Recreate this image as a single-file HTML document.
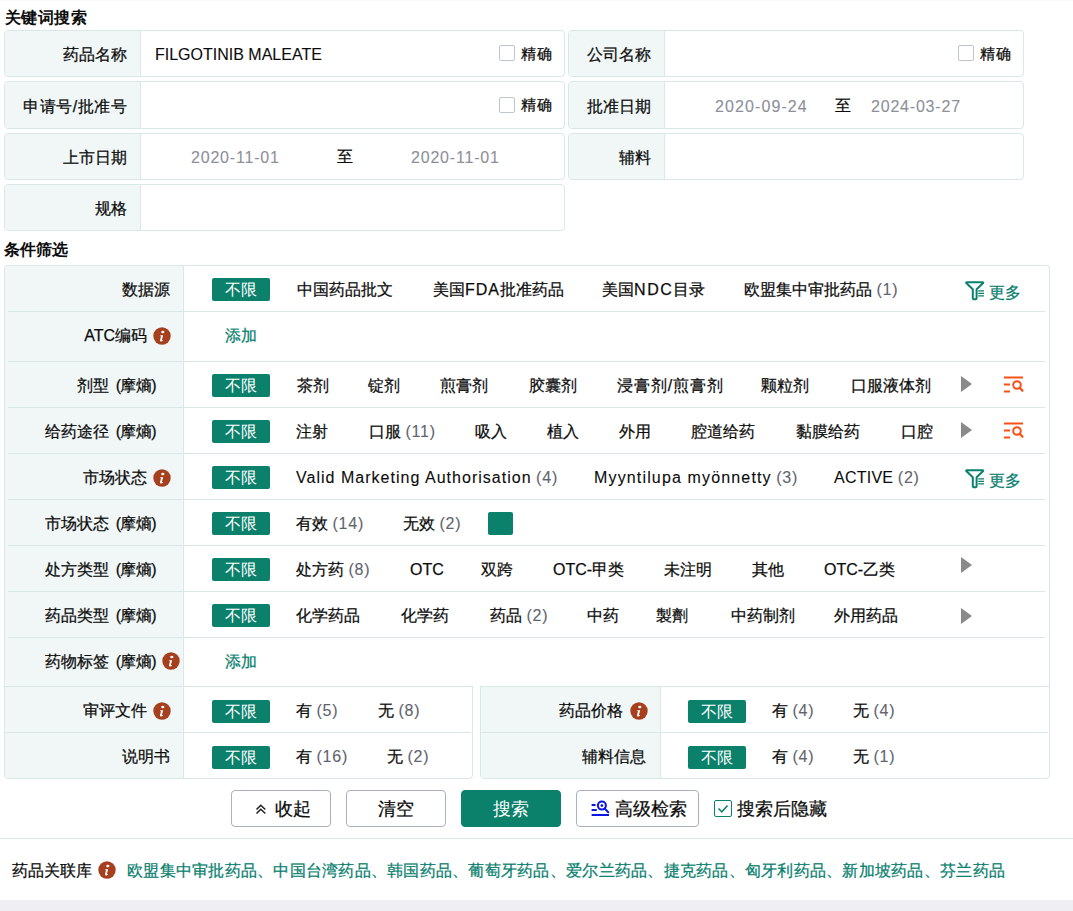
<!DOCTYPE html><html><head><meta charset="utf-8"><style>
*{margin:0;padding:0;box-sizing:border-box}
html,body{width:1073px;height:911px;overflow:hidden;background:#fff}
body{position:relative;font-family:"Liberation Sans",sans-serif;font-size:16px;color:#0c0c0c;font-weight:500;-webkit-text-stroke:0.25px currentColor}
.a{position:absolute;white-space:nowrap}
.t{position:absolute;white-space:nowrap;line-height:20px;height:20px}
.box{position:absolute;border:1px solid #d7e8e6;border-radius:4px;background:#fff;overflow:hidden}
.lbl{position:absolute;left:0;top:0;bottom:0;background:#f1f7f7;border-right:1px solid #d7e8e6}
.tag{position:absolute;background:#0b806b;color:#fff;-webkit-text-stroke:0;border-radius:2px;text-align:center;line-height:23px;height:23px;width:58px}
.c{color:#5f646d;letter-spacing:0.8px;-webkit-text-stroke:0.1px currentColor}
.lat{letter-spacing:0.8px;-webkit-text-stroke:0.1px currentColor}
.date{color:#8c9099}
.info{position:absolute;width:17px;height:17px;border-radius:50%;background:#a3401d;color:#fff;font-family:"Liberation Serif",serif;font-style:italic;font-weight:bold;font-size:13px;line-height:17px;text-align:center}
.tri{position:absolute;width:0;height:0;border-top:8px solid transparent;border-bottom:8px solid transparent;border-left:11px solid #8a8a8a}
.link{color:#08806e}
.btn{position:absolute;border:1px solid #a9b0bf;border-radius:4px;background:#fff;text-align:center;font-size:18px;line-height:36px;height:37px}
.chk{position:absolute;width:16px;height:16px;border:1px solid #bfc5cf;border-radius:2px;background:#fff}
</style></head><body><div class="a" style="left:0;top:0;width:1073px;height:1px;background:#f9f9f9"></div>
<div class="t" style="left:5px;top:7.5px;font-weight:bold;-webkit-text-stroke:0;letter-spacing:0.4px">关键词搜索</div>
<div class="box" style="left:4px;top:30.00px;width:561px;height:47.33px"><div class="lbl" style="width:136px"></div></div>
<div class="box" style="left:568px;top:30.00px;width:456px;height:47.33px"><div class="lbl" style="width:96px"></div></div>
<div class="box" style="left:4px;top:81.33px;width:561px;height:47.33px"><div class="lbl" style="width:136px"></div></div>
<div class="box" style="left:568px;top:81.33px;width:456px;height:47.33px"><div class="lbl" style="width:96px"></div></div>
<div class="box" style="left:4px;top:132.66px;width:561px;height:47.33px"><div class="lbl" style="width:136px"></div></div>
<div class="box" style="left:568px;top:132.66px;width:456px;height:47.33px"><div class="lbl" style="width:96px"></div></div>
<div class="box" style="left:4px;top:183.99px;width:561px;height:47.33px"><div class="lbl" style="width:136px"></div></div>
<div class="t " style="right:946px;top:45.2px;">药品名称</div>
<div class="t " style="right:946px;top:96.5px;letter-spacing:0.6px;margin-right:-0.6px">申请号/批准号</div>
<div class="t " style="right:946px;top:147.8px;">上市日期</div>
<div class="t " style="right:946px;top:199.2px;">规格</div>
<div class="t " style="right:422px;top:45.2px;">公司名称</div>
<div class="t " style="right:422px;top:96.5px;">批准日期</div>
<div class="t " style="right:422px;top:147.8px;">辅料</div>
<div class="t " style="left:155px;top:45.2px;-webkit-text-stroke:0.1px currentColor">FILGOTINIB MALEATE</div>
<div class="chk" style="left:499px;top:45.2px"></div>
<div class="t " style="left:521px;top:43.7px;font-size:15px;letter-spacing:0.8px">精确</div>
<div class="chk" style="left:499px;top:96.5px"></div>
<div class="t " style="left:521px;top:95.0px;font-size:15px;letter-spacing:0.8px">精确</div>
<div class="chk" style="left:958px;top:45.2px"></div>
<div class="t " style="left:980px;top:43.7px;font-size:15px;letter-spacing:0.8px">精确</div>
<div class="t date lat" style="left:191px;top:147.8px;">2020-11-01</div>
<div class="t " style="left:337px;top:146.8px;">至</div>
<div class="t date lat" style="left:411px;top:147.8px;">2020-11-01</div>
<div class="t date lat" style="left:715px;top:96.5px;letter-spacing:1.1px">2020-09-24</div>
<div class="t " style="left:835px;top:95.8px;">至</div>
<div class="t date lat" style="left:871px;top:96.5px;">2024-03-27</div>
<div class="t" style="left:4px;top:240px;font-weight:bold;-webkit-text-stroke:0">条件筛选</div>
<div class="a" style="left:4px;top:265px;width:1046px;height:422px;border:1px solid #d7e8e6;border-bottom:none;border-radius:4px 4px 0 0;overflow:hidden"><div class="lbl" style="width:179px"></div></div>
<div class="a" style="left:8px;top:311px;width:1037px;height:1px;background:#d7e8e6"></div>
<div class="a" style="left:8px;top:361px;width:1037px;height:1px;background:#d7e8e6"></div>
<div class="a" style="left:8px;top:407px;width:1037px;height:1px;background:#d7e8e6"></div>
<div class="a" style="left:8px;top:453px;width:1037px;height:1px;background:#d7e8e6"></div>
<div class="a" style="left:8px;top:499px;width:1037px;height:1px;background:#d7e8e6"></div>
<div class="a" style="left:8px;top:545px;width:1037px;height:1px;background:#d7e8e6"></div>
<div class="a" style="left:8px;top:591px;width:1037px;height:1px;background:#d7e8e6"></div>
<div class="a" style="left:8px;top:637px;width:1037px;height:1px;background:#d7e8e6"></div>
<div class="a" style="left:4px;top:686px;width:469px;height:93px;border:1px solid #d7e8e6;border-radius:0 0 4px 4px;overflow:hidden"><div class="lbl" style="width:179px"></div></div>
<div class="a" style="left:480px;top:686px;width:570px;height:93px;border:1px solid #d7e8e6;border-radius:0 0 4px 4px;overflow:hidden"><div class="lbl" style="width:180px"></div></div>
<div class="a" style="left:5px;top:732px;width:466px;height:1px;background:#d7e8e6"></div>
<div class="a" style="left:481px;top:732px;width:567px;height:1px;background:#d7e8e6"></div>
<div class="t " style="right:903px;top:280.0px;">数据源</div>
<div class="t " style="right:926px;top:326.0px;">ATC编码</div>
<svg class="a" style="left:153px;top:326.5px" width="18" height="18" viewBox="0 0 18 18"><circle cx="9" cy="9" r="8.7" fill="#a53f1d"/><ellipse cx="9.8" cy="5" rx="1.6" ry="1.3" fill="#fff"/><path d="M7.3 8.2 H10.2 L9 12.6 Q8.8 13.4 9.8 13.2 L10.3 13 Q10 14.4 8.2 14.6 Q6.6 14.6 7 13.2 L8 9.3 Q7.6 9.2 7.3 9.3 Z" fill="#fff"/></svg>
<div class="t " style="right:917px;top:376.0px;">剂型 <span style="margin-left:2px;letter-spacing:-0.6px">(摩熵)</span></div>
<div class="t " style="right:917px;top:422.0px;">给药途径 <span style="margin-left:2px;letter-spacing:-0.6px">(摩熵)</span></div>
<div class="t " style="right:926px;top:468.0px;">市场状态</div>
<svg class="a" style="left:153px;top:468.5px" width="18" height="18" viewBox="0 0 18 18"><circle cx="9" cy="9" r="8.7" fill="#a53f1d"/><ellipse cx="9.8" cy="5" rx="1.6" ry="1.3" fill="#fff"/><path d="M7.3 8.2 H10.2 L9 12.6 Q8.8 13.4 9.8 13.2 L10.3 13 Q10 14.4 8.2 14.6 Q6.6 14.6 7 13.2 L8 9.3 Q7.6 9.2 7.3 9.3 Z" fill="#fff"/></svg>
<div class="t " style="right:917px;top:514.0px;">市场状态 <span style="margin-left:2px;letter-spacing:-0.6px">(摩熵)</span></div>
<div class="t " style="right:917px;top:560.0px;">处方类型 <span style="margin-left:2px;letter-spacing:-0.6px">(摩熵)</span></div>
<div class="t " style="right:917px;top:606.0px;">药品类型 <span style="margin-left:2px;letter-spacing:-0.6px">(摩熵)</span></div>
<div class="t " style="right:917px;top:651.5px;">药物标签 <span style="margin-left:2px;letter-spacing:-0.6px">(摩熵)</span></div>
<svg class="a" style="left:162px;top:652.0px" width="18" height="18" viewBox="0 0 18 18"><circle cx="9" cy="9" r="8.7" fill="#a53f1d"/><ellipse cx="9.8" cy="5" rx="1.6" ry="1.3" fill="#fff"/><path d="M7.3 8.2 H10.2 L9 12.6 Q8.8 13.4 9.8 13.2 L10.3 13 Q10 14.4 8.2 14.6 Q6.6 14.6 7 13.2 L8 9.3 Q7.6 9.2 7.3 9.3 Z" fill="#fff"/></svg>
<div class="t " style="right:926px;top:701.0px;">审评文件</div>
<svg class="a" style="left:153px;top:701.5px" width="18" height="18" viewBox="0 0 18 18"><circle cx="9" cy="9" r="8.7" fill="#a53f1d"/><ellipse cx="9.8" cy="5" rx="1.6" ry="1.3" fill="#fff"/><path d="M7.3 8.2 H10.2 L9 12.6 Q8.8 13.4 9.8 13.2 L10.3 13 Q10 14.4 8.2 14.6 Q6.6 14.6 7 13.2 L8 9.3 Q7.6 9.2 7.3 9.3 Z" fill="#fff"/></svg>
<div class="t " style="right:903px;top:747.0px;">说明书</div>
<div class="tag" style="left:212px;top:278.0px">不限</div>
<div class="t " style="left:297px;top:280.0px;">中国药品批文</div>
<div class="t " style="left:433px;top:280.0px;">美国<span style="letter-spacing:1px">FDA</span>批准药品</div>
<div class="t " style="left:602px;top:280.0px;">美国<span style="letter-spacing:1.6px">NDC</span>目录</div>
<div class="t " style="left:744px;top:280.0px;">欧盟集中审批药品 <span class="c">(1)</span></div>
<div class="t link" style="left:225px;top:326.0px;">添加</div>
<div class="tag" style="left:212px;top:374.0px">不限</div>
<div class="t " style="left:297px;top:376.0px;">茶剂</div>
<div class="t " style="left:368px;top:376.0px;">锭剂</div>
<div class="t " style="left:440px;top:376.0px;">煎膏剂</div>
<div class="t " style="left:529px;top:376.0px;">胶囊剂</div>
<div class="t " style="left:617px;top:376.0px;"><span style="letter-spacing:0.9px">浸膏剂/煎膏剂</span></div>
<div class="t " style="left:761px;top:376.0px;">颗粒剂</div>
<div class="t " style="left:851px;top:376.0px;">口服液体剂</div>
<div class="tag" style="left:212px;top:420.0px">不限</div>
<div class="t " style="left:296px;top:422.0px;">注射</div>
<div class="t " style="left:369px;top:422.0px;">口服 <span class="c">(11)</span></div>
<div class="t " style="left:475px;top:422.0px;">吸入</div>
<div class="t " style="left:547px;top:422.0px;">植入</div>
<div class="t " style="left:619px;top:422.0px;">外用</div>
<div class="t " style="left:691px;top:422.0px;">腔道给药</div>
<div class="t " style="left:796px;top:422.0px;">黏膜给药</div>
<div class="t " style="left:901px;top:422.0px;">口腔</div>
<div class="tag" style="left:212px;top:466.0px">不限</div>
<div class="t " style="left:296px;top:468.0px;"><span class="lat" style="letter-spacing:1.02px">Valid Marketing Authorisation</span> <span class="c">(4)</span></div>
<div class="t " style="left:594px;top:468.0px;"><span class="lat" style="letter-spacing:1.15px">Myyntilupa myönnetty</span> <span class="c">(3)</span></div>
<div class="t " style="left:834px;top:468.0px;"><span class="lat" style="letter-spacing:0.25px">ACTIVE</span> <span class="c">(2)</span></div>
<div class="tag" style="left:212px;top:512.0px">不限</div>
<div class="t " style="left:296px;top:514.0px;">有效 <span class="c">(14)</span></div>
<div class="t " style="left:403px;top:514.0px;">无效 <span class="c">(2)</span></div>
<div class="a" style="left:488px;top:512px;width:25px;height:23px;background:#0b806b;border-radius:2px"></div>
<div class="tag" style="left:212px;top:558.0px">不限</div>
<div class="t " style="left:296px;top:560.0px;">处方药 <span class="c">(8)</span></div>
<div class="t " style="left:410px;top:560.0px;">OTC</div>
<div class="t " style="left:481px;top:560.0px;">双跨</div>
<div class="t " style="left:553px;top:560.0px;">OTC-甲类</div>
<div class="t " style="left:664px;top:560.0px;">未注明</div>
<div class="t " style="left:752px;top:560.0px;">其他</div>
<div class="t " style="left:824px;top:560.0px;">OTC-乙类</div>
<div class="tag" style="left:212px;top:604.0px">不限</div>
<div class="t " style="left:296px;top:606.0px;">化学药品</div>
<div class="t " style="left:401px;top:606.0px;">化学药</div>
<div class="t " style="left:490px;top:606.0px;">药品 <span class="c">(2)</span></div>
<div class="t " style="left:587px;top:606.0px;">中药</div>
<div class="t " style="left:656px;top:606.0px;">製劑</div>
<div class="t " style="left:731px;top:606.0px;">中药制剂</div>
<div class="t " style="left:834px;top:606.0px;">外用药品</div>
<div class="t link" style="left:225px;top:651.5px;">添加</div>
<div class="tag" style="left:212px;top:700.0px">不限</div>
<div class="t " style="left:296px;top:701.0px;">有 <span class="c">(5)</span></div>
<div class="t " style="left:378px;top:701.0px;">无 <span class="c">(8)</span></div>
<div class="tag" style="left:212px;top:746.0px">不限</div>
<div class="t " style="left:296px;top:747.0px;">有 <span class="c">(16)</span></div>
<div class="t " style="left:387px;top:747.0px;">无 <span class="c">(2)</span></div>
<div class="t " style="right:450px;top:701.0px;">药品价格</div>
<svg class="a" style="left:630px;top:701.5px" width="18" height="18" viewBox="0 0 18 18"><circle cx="9" cy="9" r="8.7" fill="#a53f1d"/><ellipse cx="9.8" cy="5" rx="1.6" ry="1.3" fill="#fff"/><path d="M7.3 8.2 H10.2 L9 12.6 Q8.8 13.4 9.8 13.2 L10.3 13 Q10 14.4 8.2 14.6 Q6.6 14.6 7 13.2 L8 9.3 Q7.6 9.2 7.3 9.3 Z" fill="#fff"/></svg>
<div class="t " style="right:427px;top:747.0px;">辅料信息</div>
<div class="tag" style="left:688px;top:700.0px">不限</div>
<div class="tag" style="left:688px;top:746.0px">不限</div>
<div class="t " style="left:772px;top:701.0px;">有 <span class="c">(4)</span></div>
<div class="t " style="left:853px;top:701.0px;">无 <span class="c">(4)</span></div>
<div class="t " style="left:772px;top:747.0px;">有 <span class="c">(4)</span></div>
<div class="t " style="left:853px;top:747.0px;">无 <span class="c">(1)</span></div>
<div class="tri" style="left:961px;top:376px"></div>
<div class="tri" style="left:961px;top:422px"></div>
<div class="tri" style="left:961px;top:557px"></div>
<div class="tri" style="left:961px;top:607.5px"></div>
<svg class="a" style="left:960px;top:276.0px" width="28" height="28" viewBox="0 0 28 28"><path d="M7 6.2 H22.4 Q23.8 6.2 22.9 7.3 L16.6 13.3 V22 Q16.6 23.3 14.7 23.3 Q12.8 23.3 12.8 22 V13.3 L6.5 7.3 Q5.6 6.2 7 6.2 Z" fill="none" stroke="#0b806b" stroke-width="2" stroke-linejoin="round"/><path d="M18.2 14.8 H24 M18.2 17.3 H24 M18.2 19.8 H24" stroke="#0b806b" stroke-width="1.3"/></svg>
<div class="t link" style="left:989px;top:282.5px;">更多</div>
<svg class="a" style="left:960px;top:464.0px" width="28" height="28" viewBox="0 0 28 28"><path d="M7 6.2 H22.4 Q23.8 6.2 22.9 7.3 L16.6 13.3 V22 Q16.6 23.3 14.7 23.3 Q12.8 23.3 12.8 22 V13.3 L6.5 7.3 Q5.6 6.2 7 6.2 Z" fill="none" stroke="#0b806b" stroke-width="2" stroke-linejoin="round"/><path d="M18.2 14.8 H24 M18.2 17.3 H24 M18.2 19.8 H24" stroke="#0b806b" stroke-width="1.3"/></svg>
<div class="t link" style="left:989px;top:470.5px;">更多</div>
<svg class="a" style="left:1003px;top:375.0px" width="22" height="18" viewBox="0 0 22 18"><path d="M1 2.5 H20 M1 9.5 H7 M1 16.5 H7" stroke="#fa5014" stroke-width="2"/><circle cx="14" cy="10" r="3.8" fill="none" stroke="#fa5014" stroke-width="2"/><path d="M16.8 12.8 L19.5 15.8" stroke="#fa5014" stroke-width="2.2" stroke-linecap="round"/></svg>
<svg class="a" style="left:1003px;top:421.0px" width="22" height="18" viewBox="0 0 22 18"><path d="M1 2.5 H20 M1 9.5 H7 M1 16.5 H7" stroke="#fa5014" stroke-width="2"/><circle cx="14" cy="10" r="3.8" fill="none" stroke="#fa5014" stroke-width="2"/><path d="M16.8 12.8 L19.5 15.8" stroke="#fa5014" stroke-width="2.2" stroke-linecap="round"/></svg>
<div class="btn" style="left:231px;top:790px;width:100px;padding-left:24px">收起</div>
<svg class="a" style="left:254px;top:802px" width="14" height="14" viewBox="0 0 14 14"><path d="M2.5 7.5 L6.8 3.2 L11.3 7.5 M2.5 11.5 L6.8 7.2 L11.3 11.5" fill="none" stroke="#222" stroke-width="1.5"/></svg>
<div class="btn" style="left:346px;top:790px;width:100px">清空</div>
<div class="btn" style="left:461px;top:790px;width:100px;background:#0b806b;border-color:#0b806b;color:#fff;-webkit-text-stroke:0">搜索</div>
<div class="btn" style="left:576px;top:790px;width:123px;padding-left:27px">高级检索</div>
<svg class="a" style="left:590px;top:798px" width="22" height="20" viewBox="0 0 22 20"><path d="M1.6 7 H5.6 M1.6 12 H6.8 M1.6 17 H19" stroke="#0a16e6" stroke-width="2"/><circle cx="11.9" cy="7.6" r="4" fill="none" stroke="#0a16e6" stroke-width="2"/><circle cx="11.9" cy="7.6" r="1.4" fill="#0a16e6"/><path d="M14.6 10.4 L18.2 14.2" stroke="#0a16e6" stroke-width="2" stroke-linecap="round"/></svg>
<div class="a" style="left:714px;top:800px;width:18px;height:17px;border:1.5px solid #0b806b;border-radius:2px"></div>
<svg class="a" style="left:714px;top:800px" width="18" height="17" viewBox="0 0 18 17"><path d="M4.5 8.5 L7.8 11.8 L13.5 5.5" fill="none" stroke="#0b806b" stroke-width="1.5"/></svg>
<div class="t " style="left:737px;top:799.0px;font-size:17.6px">搜索后隐藏</div>
<div class="a" style="left:0;top:838px;width:1073px;height:1px;background:#d9e9e5"></div>
<div class="t " style="left:12px;top:860.5px;">药品关联库</div>
<svg class="a" style="left:98px;top:860.7px" width="18" height="18" viewBox="0 0 18 18"><circle cx="9" cy="9" r="8.7" fill="#a53f1d"/><ellipse cx="9.8" cy="5" rx="1.6" ry="1.3" fill="#fff"/><path d="M7.3 8.2 H10.2 L9 12.6 Q8.8 13.4 9.8 13.2 L10.3 13 Q10 14.4 8.2 14.6 Q6.6 14.6 7 13.2 L8 9.3 Q7.6 9.2 7.3 9.3 Z" fill="#fff"/></svg>
<div class="t link" style="left:127px;top:860.5px;letter-spacing:0.26px">欧盟集中审批药品、中国台湾药品、韩国药品、葡萄牙药品、爱尔兰药品、捷克药品、匈牙利药品、新加坡药品、芬兰药品</div>
<div class="a" style="left:0;top:900px;width:1073px;height:11px;background:#efeff3"></div></body></html>
